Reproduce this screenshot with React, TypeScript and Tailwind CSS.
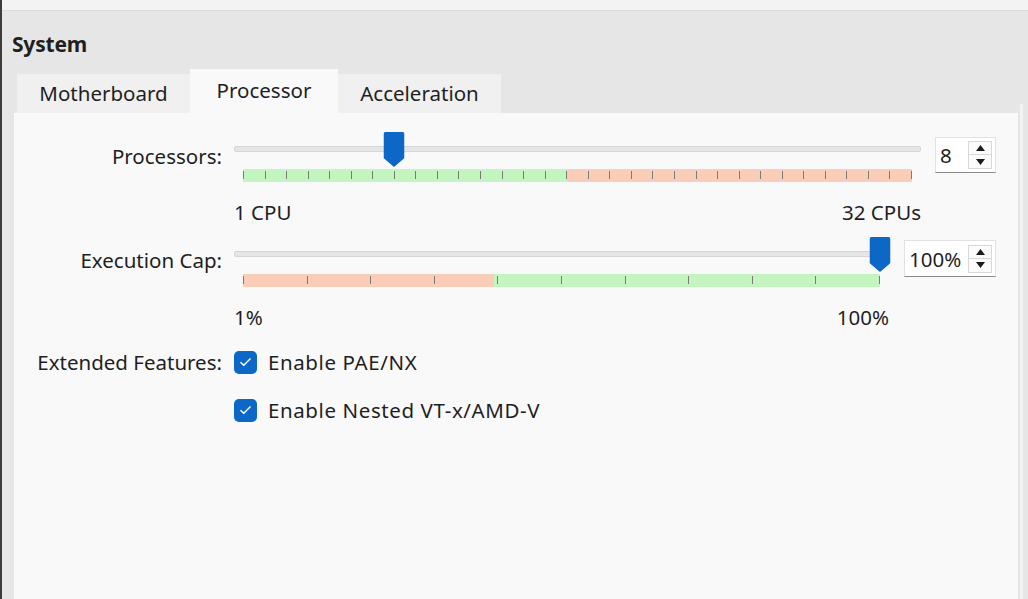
import React from 'react';

const font = "font-['Noto_Sans','Open_Sans',sans-serif]";

function Handle() {
  return (
    <svg width="21" height="35" viewBox="0 0 21 35">
      <path d="M2 0 H19 Q21 0 21 2 V26 L10.5 35 L0 26 V2 Q0 0 2 0 Z" fill="#0c67c6" />
    </svg>
  );
}

function Slider({
  ticks,
  value,
  split,
  lowGood,
}: {
  ticks: number;
  value: number;
  split: number;
  lowGood: boolean;
}) {
  const good = 'bg-[#c4f5c0]';
  const bad = 'bg-[#f9cdb7]';
  return (
    <div className="relative h-[51px]">
      <div className="mt-[14px] h-[6px] rounded-[2px] border border-[#d6d6d6] bg-[#e6e6e6]" />
      <div className="relative mx-[9px] mt-[17px] flex h-[13px]">
        <div className={lowGood ? good : bad} style={{ width: `${split}%` }} />
        <div className={`flex-1 ${lowGood ? bad : good}`} />
        {Array.from({ length: ticks }).map((_, i) => (
          <div
            key={i}
            className="absolute top-[2px] h-[8px] w-px bg-[#7a7a7a]"
            style={{ left: `calc(${(i / (ticks - 1)) * 100}% - ${i / (ticks - 1)}px)` }}
          />
        ))}
      </div>
      <div className="absolute inset-y-0 left-[9px] right-[9px]">
        <div className="absolute top-0 -translate-x-1/2" style={{ left: `${value * 100}%` }}>
          <Handle />
        </div>
      </div>
    </div>
  );
}

function SpinBox({ value, width, height }: { value: string; width: string; height: string }) {
  return (
    <div className={`flex items-center justify-between border border-b-[#8a8a8a] border-[#e2e2e2] bg-white pl-[4px] pr-[3px] ${width} ${height}`}>
      <span className="text-[20.5px] leading-[24px] text-[#1f1f1f]">{value}</span>
      <div className="flex w-[24px] flex-col border border-[#d8d8d8] bg-[#fbfbfb]">
        <div className="flex h-[13px] items-center justify-center border-b border-[#d8d8d8]">
          <svg width="9" height="6" viewBox="0 0 9 6">
            <path d="M4.5 0 L9 6 H0 Z" fill="#1b1b1b" />
          </svg>
        </div>
        <div className="flex h-[13px] items-center justify-center">
          <svg width="9" height="6" viewBox="0 0 9 6">
            <path d="M0 0 H9 L4.5 6 Z" fill="#1b1b1b" />
          </svg>
        </div>
      </div>
    </div>
  );
}

function Check({ label }: { label: string }) {
  return (
    <div className="flex h-[24px] items-center gap-[11px]">
      <div className="flex h-[23px] w-[23px] items-center justify-center rounded-[5px] bg-[#0c67c6]">
        <svg width="13" height="10" viewBox="0 0 13 10">
          <path d="M1.5 5.2 L4.8 8.3 L11.5 1.6" fill="none" stroke="#fff" strokeWidth="1.4" />
        </svg>
      </div>
      <span className="tracking-[0.6px]">{label}</span>
    </div>
  );
}

export default function App() {
  return (
    <div className={`flex h-[599px] w-[1028px] flex-col overflow-hidden border-l-2 border-[#3c3c3c] bg-[#e6e6e6] text-[#1f1f1f] ${font}`}>
      <div className="h-[11px] shrink-0 border-b border-[#d9d9d9] bg-[#f3f3f3]" />
      <div className="pl-[10px] pt-[21px] text-[21px] font-bold leading-[24px] tracking-[-0.2px]">System</div>

      <div className="ml-[15px] mt-[13px] flex h-[44px] items-end text-[20.5px]">
        <div className="flex h-[39px] w-[173px] items-center justify-center bg-[#f0f0f0]">Motherboard</div>
        <div className="flex h-[44px] w-[148px] items-center justify-center bg-[#f9f9f9] pb-[2px]">Processor</div>
        <div className="flex h-[39px] w-[163px] items-center justify-center bg-[#f0f0f0]">Acceleration</div>
      </div>

      <div className="flex flex-1">
        <div className="ml-[12px] flex flex-1 flex-col bg-[#f9f9f9] pr-[22px] pt-[19px] text-[20.5px] leading-[24px]">
          <div className="flex items-start">
            <div className="w-[208px] pt-[12px] text-right">Processors:</div>
            <div className="ml-[12px] flex flex-1 flex-col">
              <Slider ticks={32} value={7 / 31} split={48.4} lowGood={true} />
              <div className="mt-[18px] flex justify-between leading-[22px]">
                <span>1 CPU</span>
                <span>32 CPUs</span>
              </div>
            </div>
            <div className="ml-[14px] mt-[5px]">
              <SpinBox value="8" width="w-[61px]" height="h-[36px]" />
            </div>
          </div>

          <div className="mt-[14px] flex items-start">
            <div className="w-[208px] pt-[11px] text-right">Execution Cap:</div>
            <div className="ml-[12px] flex flex-1 flex-col">
              <Slider ticks={11} value={1} split={39.4} lowGood={false} />
              <div className="mt-[18px] flex justify-between leading-[22px]">
                <span>1%</span>
                <span>100%</span>
              </div>
            </div>
            <div className="ml-[15px] mt-[3px]">
              <SpinBox value="100%" width="w-[92px]" height="h-[37px]" />
            </div>
          </div>

          <div className="mt-[22px] flex items-start">
            <div className="w-[208px] text-right">Extended Features:</div>
            <div className="ml-[12px] flex flex-col gap-[24px]">
              <Check label="Enable PAE/NX" />
              <Check label="Enable Nested VT-x/AMD-V" />
            </div>
          </div>
        </div>
        <div className="flex w-[10px] pl-[2px]">
          <div className="mt-[-9px] w-[3px] bg-[#f2f2f2]" />
        </div>
      </div>
    </div>
  );
}
